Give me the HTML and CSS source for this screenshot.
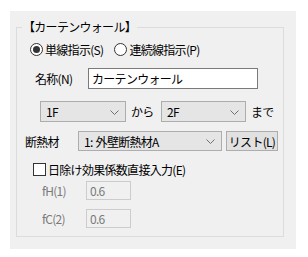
FILE: index.html
```html
<!DOCTYPE html>
<html lang="ja">
<head>
  <meta charset="UTF-8">
  <title>カーテンウォール</title>
  <link rel="stylesheet" href="styles.css">
</head>
<body>
  <div class="panel">
    <div class="group">
      <span class="group-title">【カーテンウォール】</span>

      <div class="row r-radio">
        <label class="radio on"><span class="dot"></span>単線指示(S)</label>
        <label class="radio"><span class="dot"></span>連続線指示(P)</label>
      </div>

      <div class="row r-name">
        <span class="lbl name-lbl">名称(N)</span>
        <span class="edit name-edit">カーテンウォール</span>
      </div>

      <div class="row r-floor">
        <span class="combo floor-from">1F<svg class="chev" width="9" height="5" viewBox="0 0 9 5"><polyline points="0.5,0.5 4.5,4.5 8.5,0.5" /></svg></span>
        <span class="lbl kara">から</span>
        <span class="combo floor-to">2F<svg class="chev" width="9" height="5" viewBox="0 0 9 5"><polyline points="0.5,0.5 4.5,4.5 8.5,0.5" /></svg></span>
        <span class="lbl made">まで</span>
      </div>

      <div class="row r-ins">
        <span class="lbl ins-lbl">断熱材</span>
        <span class="combo ins-combo">1: 外壁断熱材A<svg class="chev" width="9" height="5" viewBox="0 0 9 5"><polyline points="0.5,0.5 4.5,4.5 8.5,0.5" /></svg></span>
        <span class="btn">リスト(L)</span>
      </div>

      <div class="row r-check">
        <label class="check"><span class="box"></span>日除け効果係数直接入力(E)</label>
      </div>

      <div class="row r-coef">
        <span class="lbl off coef-lbl">fH(1)</span>
        <span class="edit off coef-edit">0.6</span>
      </div>
      <div class="row r-coef r-coef2">
        <span class="lbl off coef-lbl">fC(2)</span>
        <span class="edit off coef-edit">0.6</span>
      </div>
    </div>
  </div>
</body>
</html>
```

FILE: styles.css
```css
body {
  margin: 0;
  background-color: #ffffff;
  font-family: "Noto Sans CJK JP", "Noto Sans", sans-serif;
  font-size: 12px;
  letter-spacing: -0.7px;
  word-spacing: 1px;
  color: #000000;
}
.panel {
  margin: 11px 0 0 10px;
  width: 286px;
  height: 238px;
  box-sizing: border-box;
  padding: 16px 12px 12px 6px;
  background-color: #f0f0f0;
}
.group {
  position: relative;
  height: 210px;
  box-sizing: border-box;
  border: 1px solid #dcdcdc;
  padding-top: 13px;
}
.group-title {
  position: absolute;
  top: -10px;
  left: 5px;
  line-height: 18px;
  padding: 0 1px;
  background-color: #f0f0f0;
}
.row {
  display: flex;
  align-items: center;
  white-space: nowrap;
}
.off {
  color: #7a7a7a;
}

/* radio row */
.r-radio {
  height: 16px;
  padding-left: 13px;
}
.radio {
  display: flex;
  align-items: center;
}
.radio .dot {
  width: 11px;
  height: 11px;
  border: 1px solid #333333;
  border-radius: 50%;
  background-color: #ffffff;
  margin-right: 2px;
  position: relative;
}
.radio.on .dot::after {
  content: "";
  position: absolute;
  left: 2px;
  top: 2px;
  width: 7px;
  height: 7px;
  border-radius: 50%;
  background-color: #333333;
}
.radio + .radio {
  margin-left: 11px;
}

/* name row */
.r-name {
  margin-top: 11px;
  height: 21px;
}
.name-lbl {
  margin-left: 18px;
  width: 53px;
}
.edit {
  box-sizing: border-box;
  height: 100%;
  border: 1px solid #7a7a7a;
  background-color: #ffffff;
  padding-left: 3px;
  display: flex;
  align-items: center;
}
.name-edit {
  width: 170px;
}

/* floor row */
.r-floor {
  margin-top: 12px;
  height: 21px;
}
.combo {
  box-sizing: border-box;
  height: 100%;
  border: 1px solid #adadad;
  background-color: #e5e5e5;
  padding-left: 5px;
  display: flex;
  align-items: center;
  position: relative;
}
.chev {
  position: absolute;
  right: 6px;
  top: 50%;
  margin-top: -2px;
}
.chev polyline {
  fill: none;
  stroke: #707070;
  stroke-width: 1;
}
.floor-from {
  margin-left: 23px;
  width: 86px;
}
.kara {
  margin-left: 5px;
  width: 30px;
}
.floor-to {
  width: 85px;
}
.made {
  margin-left: 5px;
}

/* insulation row */
.r-ins {
  margin-top: 9px;
  height: 20px;
}
.ins-lbl {
  margin-left: 8px;
  width: 53px;
}
.ins-combo {
  width: 144px;
}
.btn {
  box-sizing: border-box;
  margin-left: 4px;
  width: 52px;
  height: 20px;
  border: 1px solid #adadad;
  background-color: #e1e1e1;
  display: flex;
  align-items: center;
  justify-content: center;
}

/* checkbox row */
.r-check {
  margin-top: 11px;
  height: 14px;
  padding-left: 16px;
}
.check {
  display: flex;
  align-items: center;
}
.check .box {
  width: 11px;
  height: 11px;
  border: 1px solid #333333;
  background-color: #ffffff;
  margin-right: 2px;
}

/* coefficient rows */
.r-coef {
  margin-top: 5px;
  height: 19px;
}
.r-coef2 {
  margin-top: 9px;
}
.coef-lbl {
  margin-left: 25px;
  width: 44px;
}
.coef-edit {
  width: 45px;
  border-color: #cccccc;
  background-color: #f0f0f0;
}
```
